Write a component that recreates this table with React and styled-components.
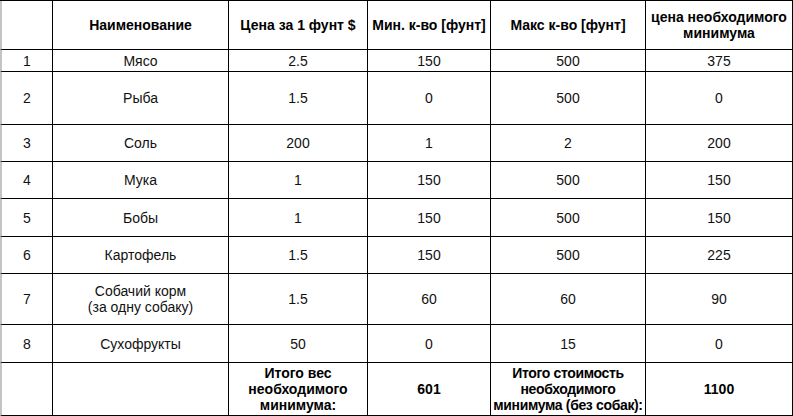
import React from "react";
import styled, { createGlobalStyle } from "styled-components";

const GlobalStyle = createGlobalStyle`
  html, body {
    margin: 0;
    padding: 0;
    background: #fff;
  }
  body {
    font-family: "Liberation Sans", Arial, sans-serif;
    font-size: 14px;
    color: #000;
  }
`;

const Sheet = styled.div`
  display: grid;
  grid-template-columns: 53px 176px 139px 123px 155px 147px;
  grid-auto-rows: auto;
  width: 793px;
  border-top: 1px solid #000;
  box-sizing: border-box;
`;

const Cell = styled.div`
  box-sizing: border-box;
  height: ${(p) => p.$h}px;
  display: flex;
  align-items: center;
  justify-content: center;
  text-align: center;
  white-space: nowrap;
  line-height: 16px;
  padding: 0;
  letter-spacing: ${(p) => (p.$tight ? "-0.35px" : "normal")};
  border-right: 1px solid #000;
  border-bottom: 1px solid #000;
  border-left: ${(p) => (p.$first ? "2px solid #c4c4c4" : "none")};
  font-weight: ${(p) => (p.$bold ? 700 : 400)};
  color: ${(p) => (p.$bold ? "#000" : "#111")};
`;

const headers = [
  "",
  "Наименование",
  "Цена за 1 фунт $",
  "Мин. к-во [фунт]",
  "Макс к-во [фунт]",
  <>цена необходимого<br />минимума</>,
];

const rows = [
  { h: 22, cells: ["1", "Мясо", "2.5", "150", "500", "375"] },
  { h: 53, cells: ["2", "Рыба", "1.5", "0", "500", "0"] },
  { h: 37, cells: ["3", "Соль", "200", "1", "2", "200"] },
  { h: 37, cells: ["4", "Мука", "1", "150", "500", "150"] },
  { h: 38, cells: ["5", "Бобы", "1", "150", "500", "150"] },
  { h: 37, cells: ["6", "Картофель", "1.5", "150", "500", "225"] },
  {
    h: 51,
    cells: ["7", <>Собачий корм<br />(за одну собаку)</>, "1.5", "60", "60", "90"],
  },
  { h: 38, cells: ["8", "Сухофрукты", "50", "0", "15", "0"] },
];

const totals = [
  "",
  "",
  <>Итого вес<br />необходимого<br />минимума:</>,
  "601",
  <>Итого стоимость<br />необходимого<br />минимума (без собак):</>,
  "1100",
];

const App = () => {
  return (
    <>
      <GlobalStyle />
      <Sheet>
        {headers.map((t, i) => (
          <Cell key={"h" + i} $h={49} $first={i === 0} $bold>
            {t}
          </Cell>
        ))}
        {rows.map((r, ri) =>
          r.cells.map((t, i) => (
            <Cell key={ri + "-" + i} $h={r.h} $first={i === 0}>
              {t}
            </Cell>
          ))
        )}
        {totals.map((t, i) => (
          <Cell key={"t" + i} $h={53} $first={i === 0} $tight={i === 4} $bold>
            {t}
          </Cell>
        ))}
      </Sheet>
    </>
  );
};

export default App;
